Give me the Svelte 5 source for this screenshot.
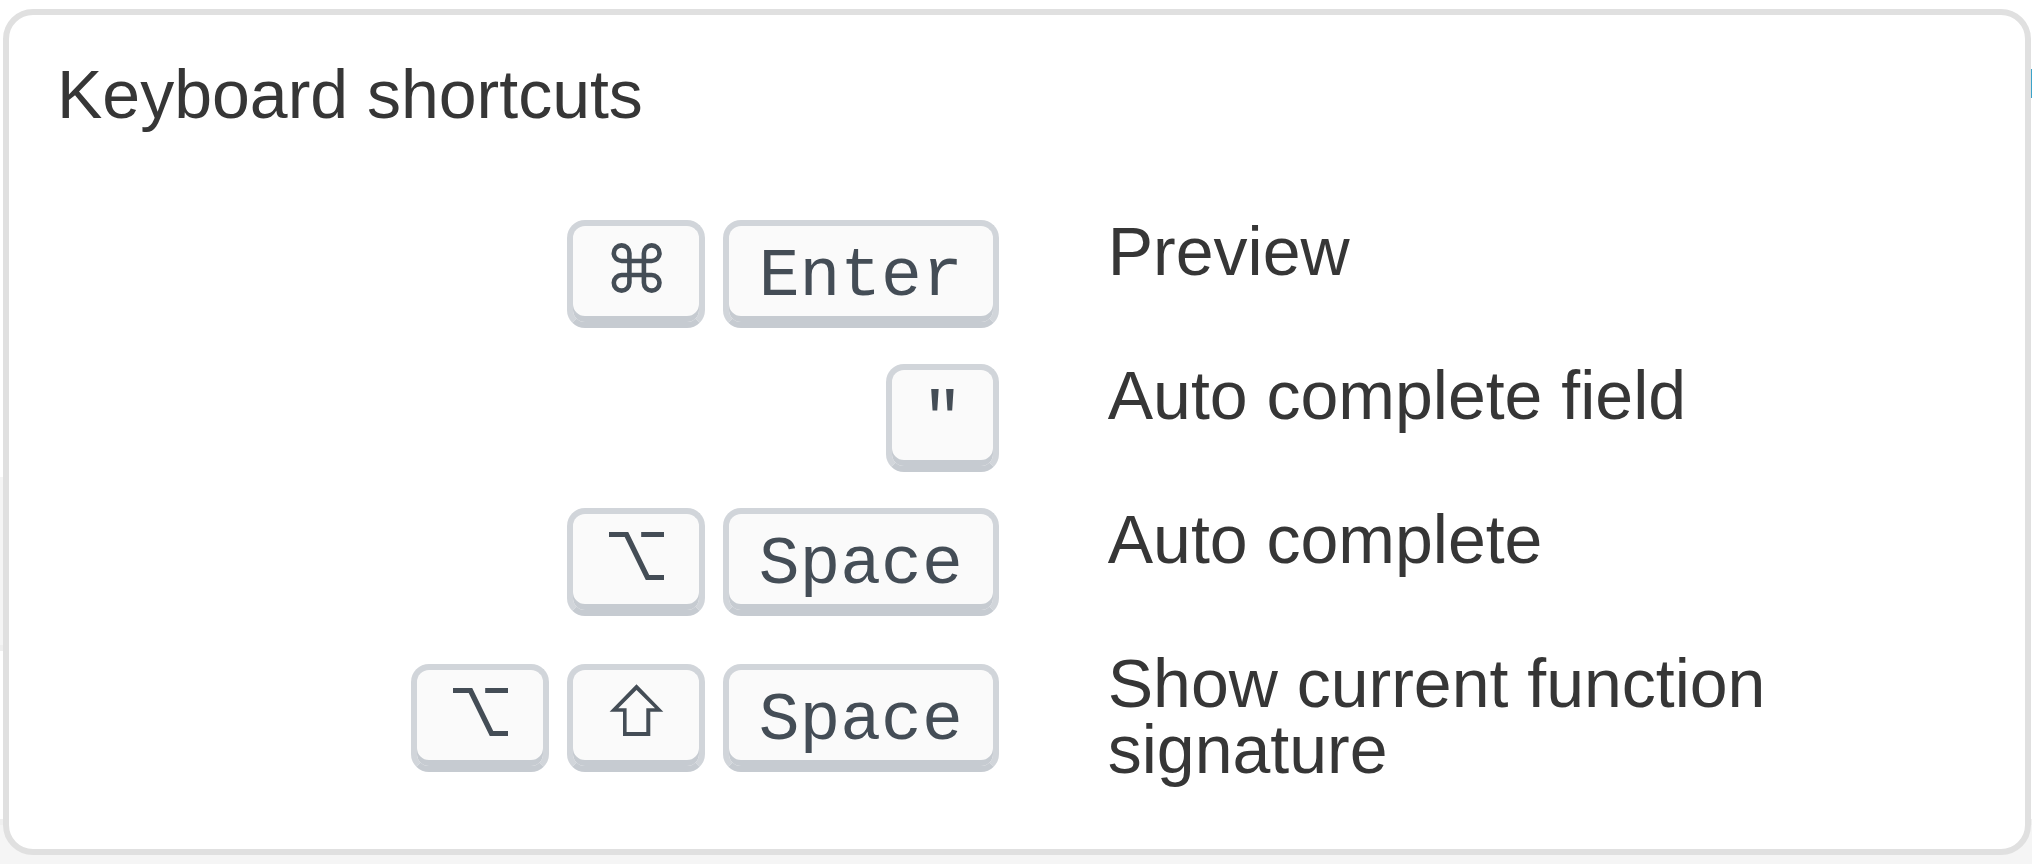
<script>
  const shortcuts = [
    { keys: ['command', 'Enter'], label: 'Preview' },
    { keys: ['"'], label: 'Auto complete field' },
    { keys: ['option', 'Space'], label: 'Auto complete' },
    { keys: ['option', 'shift', 'Space'], label: 'Show current function signature' }
  ];
</script>

<main class="page">
  <section class="card" aria-labelledby="title">
    <h2 id="title">Keyboard shortcuts</h2>
    <dl>
      {#each shortcuts as shortcut}
        <div class="row">
          <dt>
            {#each shortcut.keys as key}
              <kbd>
                {#if key === 'command'}
                  <svg viewBox="0 3 66 60" role="img" aria-label="Command">
                    <path class="line" d="M26.4 9.2V38.8a7.8 7.8 0 1 1-7.8-7.8H48.7a7.8 7.8 0 1 1-7.8 7.8V9.2a7.8 7.8 0 1 1 7.8 7.8H18.6a7.8 7.8 0 1 1 7.8-7.8z" />
                  </svg>
                {:else if key === 'option'}
                  <svg viewBox="0 3 66 60" role="img" aria-label="Option">
                    <path d="M6 0H25.2L46.2 43H61V48H42.8L21.7 5H6zM38.2 0H61V5H38.2z" />
                  </svg>
                {:else if key === 'shift'}
                  <svg viewBox="0 3 66 60" role="img" aria-label="Shift">
                    <path fill-rule="evenodd" d="M33.5-3.7L60.3 23.7H47.3V48H20V23.7H6.6zM33.5 2L15.3 20.3H23.6V44H43.3V20.3H52z" />
                  </svg>
                {:else}{key}{/if}
              </kbd>
            {/each}
          </dt>
          <dd>{shortcut.label}</dd>
        </div>
      {/each}
    </dl>
  </section>
</main>

<style>
  :global(body) {
    margin: 0;
    background: #fff;
  }

  .page {
    box-sizing: border-box;
    min-height: 100vh;
    padding: 9px 1px 9px 3px;
    background:
      linear-gradient(#3ba3c9, #3ba3c9) right 69px / 1px 29px no-repeat,
      linear-gradient(#f5f5f5 168px, #efefef 168px) left 477px / 3px 174px no-repeat,
      linear-gradient(#f0f0f0 6px, #f5f5f5 6px) left bottom / 100% 45px no-repeat;
    font-family: "Liberation Sans", Arial, Helvetica, sans-serif;
    font-size: 68px;
    line-height: 66px;
    color: #363636;
  }

  .card {
    padding: 46px 48px 67px;
    border: 6px solid #e0e0e0;
    border-radius: 30px;
    background: #fff;
  }

  h2 {
    margin: 0 0 91px;
    font-size: inherit;
    font-weight: 400;
  }

  dl {
    display: grid;
    gap: 24px;
    margin: 0;
  }

  .row {
    display: grid;
    grid-template-columns: 52fr 48fr;
    column-gap: 109px;
  }

  dt {
    display: flex;
    align-items: flex-end;
    justify-content: flex-end;
    gap: 18px;
    padding: 2px 0 10px;
  }

  dd {
    margin: 0;
  }

  kbd {
    display: block;
    padding: 21px 30px 15px;
    border: 6px solid #d1d5da;
    border-bottom-color: #c6cbd1;
    border-radius: 18px;
    background: #fafafa;
    box-shadow: inset 0 -6px 0 #c6cbd1;
    font-family: "Liberation Mono", "Courier New", monospace;
    font-size: 68px;
    line-height: 60px;
    color: #444d56;
  }

  svg {
    display: block;
    width: 66px;
    height: 60px;
    overflow: visible;
    fill: currentColor;
  }

  .line {
    fill: none;
    stroke: currentColor;
    stroke-width: 4.6;
  }
</style>
